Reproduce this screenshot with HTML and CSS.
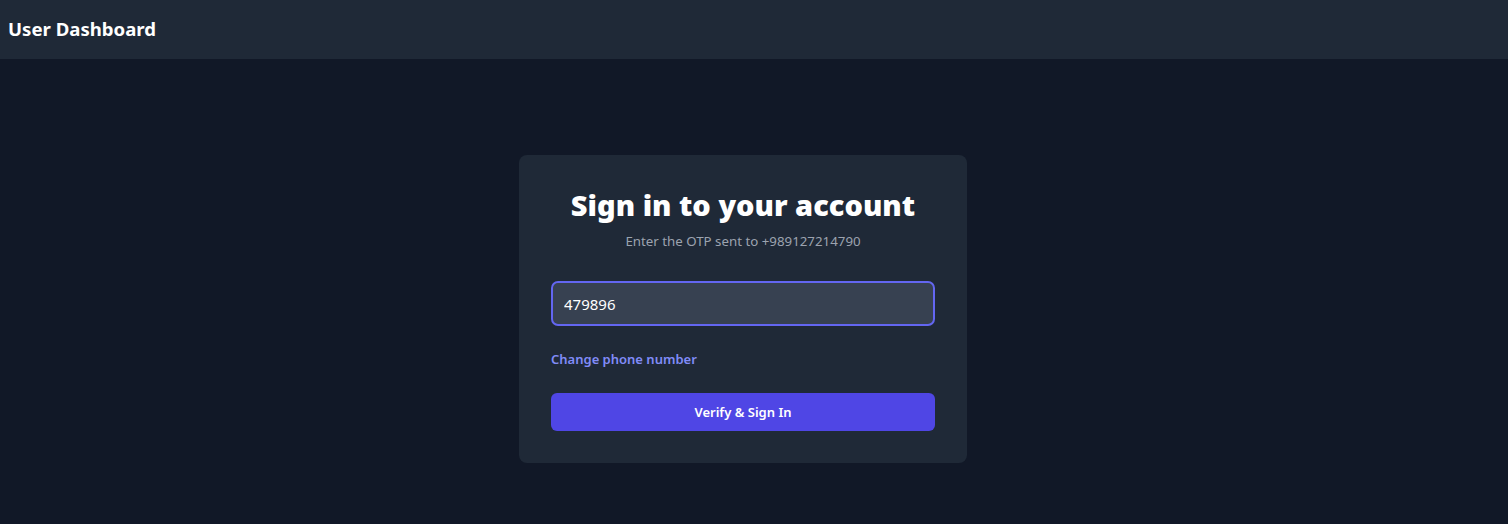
FILE: index.html
```html
<!DOCTYPE html>
<html lang="en">
<head>
<meta charset="utf-8">
<title>User Dashboard</title>
<link rel="stylesheet" href="styles.css">
</head>
<body>
<header class="topbar">
  <h1 class="brand">User Dashboard</h1>
</header>
<main class="main">
  <section class="card">
    <h2 class="title">Sign in to your account</h2>
    <p class="subtitle">Enter the OTP sent to +989127214790</p>
    <form class="form">
      <input class="otp" type="text" value="479896">
      <a class="link" href="#">Change phone number</a>
      <button class="btn" type="button">Verify &amp; Sign In</button>
    </form>
  </section>
</main>
</body>
</html>
```
FILE: styles.css
```css
* { box-sizing: border-box; }
html, body { margin: 0; padding: 0; }
body {
  background: #111827;
  color: #fff;
  font-family: "Noto Sans", "Open Sans", sans-serif;
  min-height: 524px;
}
.topbar {
  background: #1f2937;
  height: 59px;
  display: flex;
  align-items: center;
  padding: 0 8px 2px;
}
.brand {
  margin: 0;
  font-size: 18.6px;
  font-weight: 700;
  line-height: 28px;
  color: #fff;
}
.main {
  display: flex;
  justify-content: center;
  padding: 96px 22px 0 0;
}
.card {
  width: 448px;
  background: #1f2937;
  border-radius: 8px;
  padding: 32px;
}
.title {
  margin: 0;
  text-align: center;
  font-size: 29px;
  line-height: 36px;
  font-weight: 900;
  color: #fff;
}
.subtitle {
  margin: 8px 0 0;
  text-align: center;
  font-size: 13.3px;
  line-height: 20px;
  color: #9ca3af;
}
.form {
  margin-top: 30px;
  display: flex;
  flex-direction: column;
}
.otp {
  height: 45px;
  width: 100%;
  background: #374151;
  border: 2.5px solid #6366f1;
  border-radius: 7px;
  padding: 0 11px;
  font-family: inherit;
  font-size: 15px;
  color: #fff;
  outline: none;
}
.link {
  margin-top: 23px;
  font-size: 13px;
  line-height: 20px;
  font-weight: 600;
  color: #818cf8;
  text-decoration: none;
  align-self: flex-start;
}
.btn {
  margin-top: 24px;
  height: 38px;
  width: 100%;
  background: #4f46e5;
  border: none;
  border-radius: 6px;
  color: #fff;
  font-family: inherit;
  font-size: 13px;
  font-weight: 600;
}
```
